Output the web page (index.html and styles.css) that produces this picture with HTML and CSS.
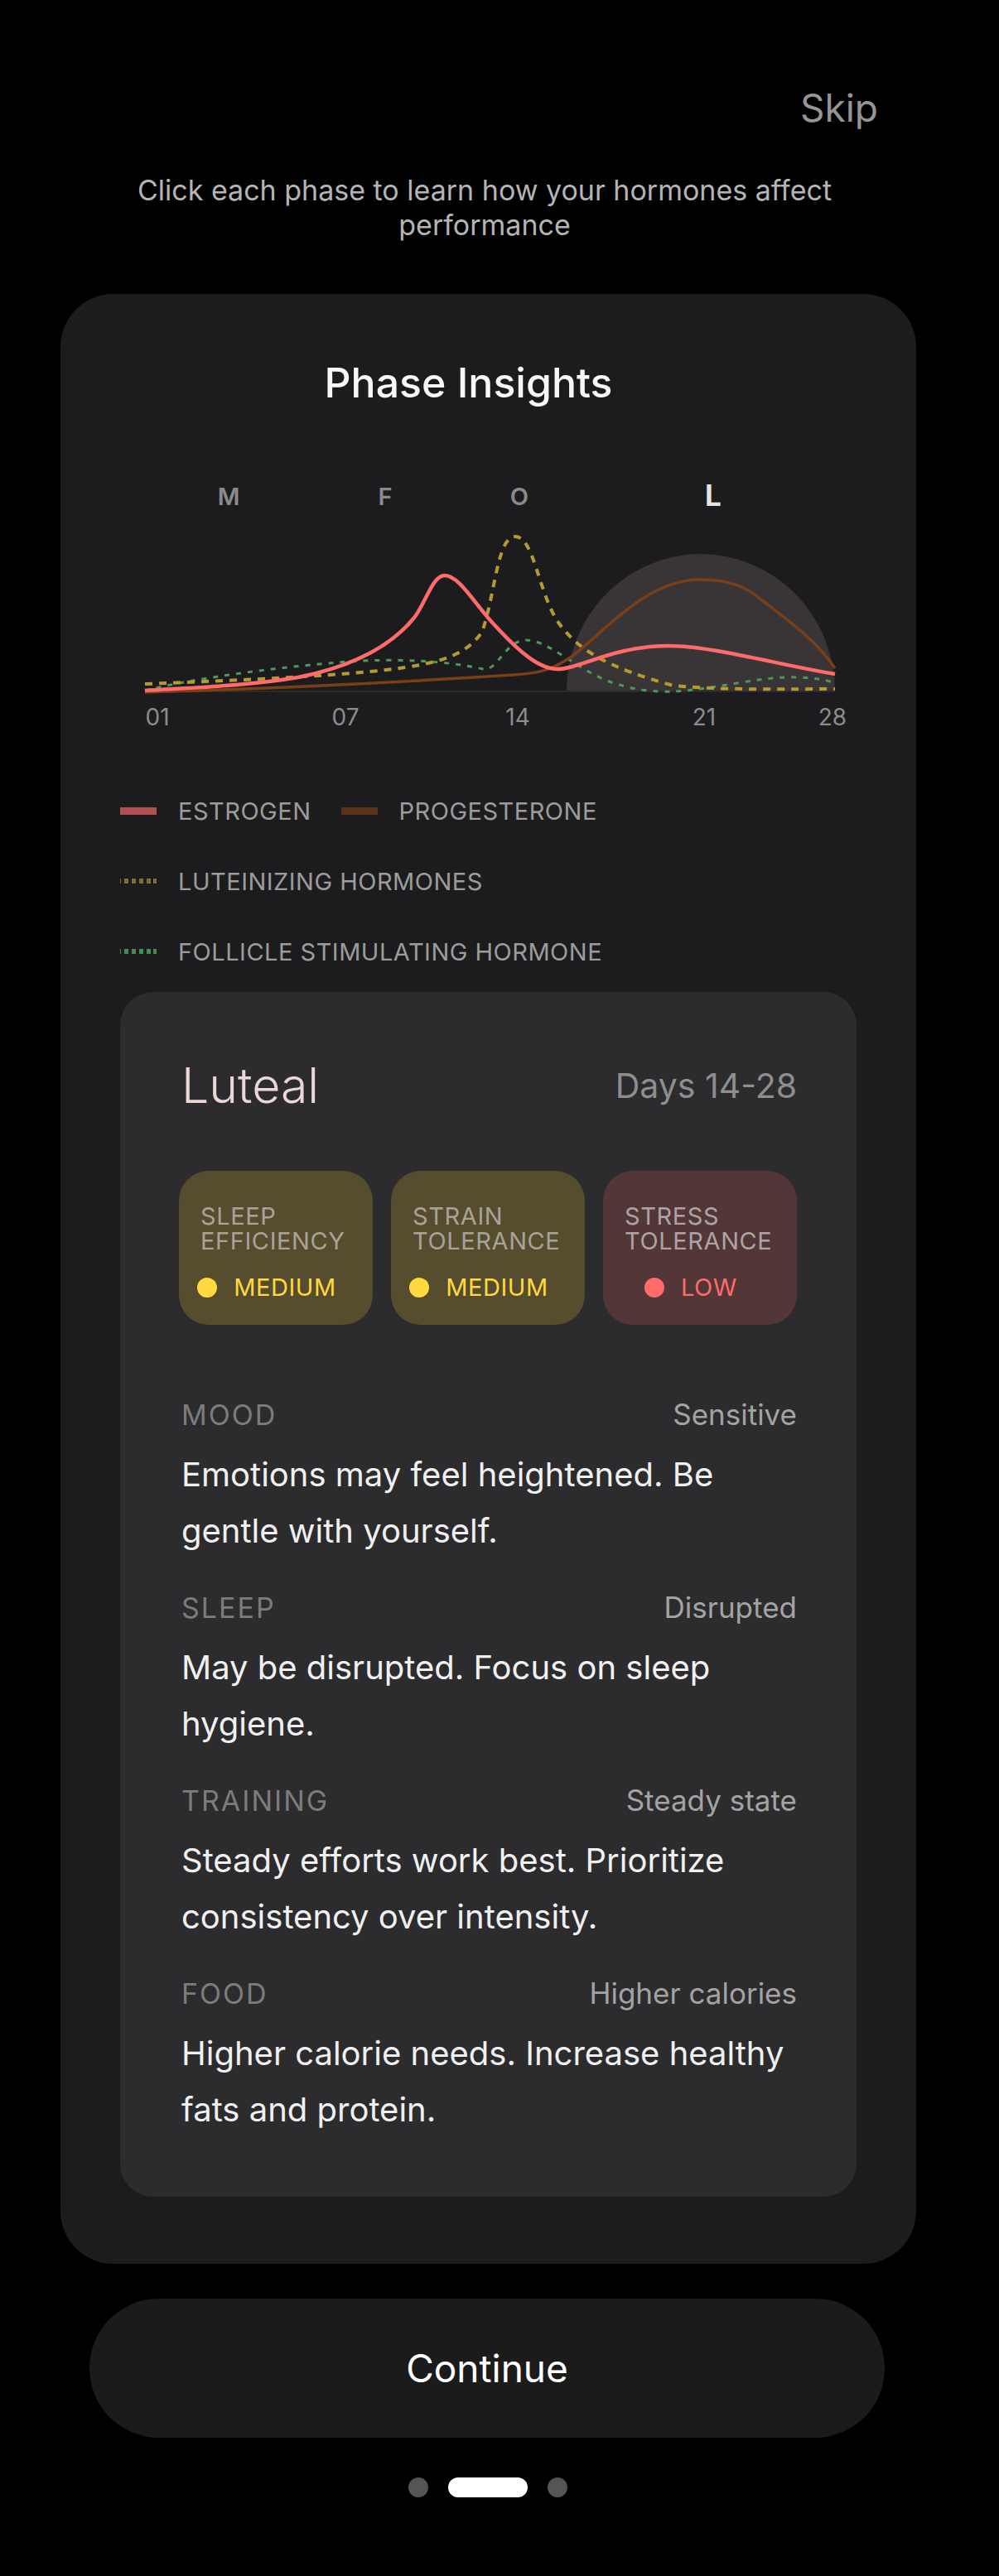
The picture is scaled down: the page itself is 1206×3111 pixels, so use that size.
FILE: index.html
```html
<!DOCTYPE html>
<html lang="en">
<head>
<meta charset="utf-8">
<title>Phase Insights</title>
<link rel="stylesheet" href="styles.css">
</head>
<body>
<div class="screen">
  <div class="topbar"><span class="skip">Skip</span></div>
  <p class="subtitle">Click each phase to learn how your hormones affect performance</p>

  <section class="card">
    <h1 class="card-title">Phase Insights</h1>

    <svg class="chart" width="889" height="340" viewBox="145 560 889 340" xmlns="http://www.w3.org/2000/svg">
      <text class="phase-label" x="276" y="612">M</text>
      <text class="phase-label" x="465" y="612">F</text>
      <text class="phase-label" x="627" y="612">O</text>
      <text class="phase-label active" x="861" y="613">L</text>

      <path class="shade" d="M684,837 A162,166 0 0 1 1008,837 Z"/>
      <line class="axis" x1="175" y1="837" x2="1008" y2="837"/>

      <path class="fsh" d="M175,836 C230,822 330,808 420,801 C480,797 540,800 583,810 C600,814 610,775 635,775 C660,775 690,805 730,823 C760,835 790,838 813,837 C860,835 920,818 963,820 C990,821 1000,824 1008,827"/>
      <path class="lh" d="M175,828 C300,823 420,818 490,808 C540,800 565,790 582,765 C598,720 600,650 622,650 C645,650 650,720 675,755 C700,790 740,810 813,830 C880,836 950,834 1008,834"/>
      <path class="prog" d="M175,838 C320,834 480,826 620,817 C650,815 665,812 690,795 C730,765 780,702 845,702 C880,702 900,710 920,727 C950,750 985,775 1008,809"/>
      <path class="estro" d="M175,836 C240,832 300,830 360,820 C420,808 470,785 500,748 C515,728 522,697 537,697 C555,697 575,735 600,760 C625,787 650,810 673,810 C700,810 740,782 807,782 C860,782 940,805 1008,816"/>

      <text class="tick" x="190" y="878">01</text>
      <text class="tick" x="417" y="878">07</text>
      <text class="tick" x="625" y="878">14</text>
      <text class="tick" x="850" y="878">21</text>
      <text class="tick" x="1005" y="878">28</text>
    </svg>

    <ul class="legend">
      <li class="legend-item"><span class="swatch swatch-estro"></span>ESTROGEN</li>
      <li class="legend-item"><span class="swatch swatch-prog"></span>PROGESTERONE</li>
      <li class="legend-item"><span class="swatch swatch-dotted swatch-lh"></span>LUTEINIZING HORMONES</li>
      <li class="legend-item"><span class="swatch swatch-dotted swatch-fsh"></span>FOLLICLE STIMULATING HORMONE</li>
    </ul>

    <div class="phase-card">
      <div class="phase-head">
        <h2 class="phase-name">Luteal</h2>
        <span class="phase-days">Days 14-28</span>
      </div>

      <div class="badges">
        <div class="badge badge-medium">
          <div class="badge-label">SLEEP<br>EFFICIENCY</div>
          <div class="badge-status"><span class="dot"></span>MEDIUM</div>
        </div>
        <div class="badge badge-medium">
          <div class="badge-label">STRAIN<br>TOLERANCE</div>
          <div class="badge-status"><span class="dot"></span>MEDIUM</div>
        </div>
        <div class="badge badge-low">
          <div class="badge-label">STRESS<br>TOLERANCE</div>
          <div class="badge-status"><span class="dot"></span>LOW</div>
        </div>
      </div>

      <div class="sections">
        <div class="section">
          <div class="section-head"><span class="section-label">MOOD</span><span class="section-value">Sensitive</span></div>
          <p class="section-body">Emotions may feel heightened. Be gentle with yourself.</p>
        </div>
        <div class="section">
          <div class="section-head"><span class="section-label">SLEEP</span><span class="section-value">Disrupted</span></div>
          <p class="section-body">May be disrupted. Focus on sleep hygiene.</p>
        </div>
        <div class="section">
          <div class="section-head"><span class="section-label">TRAINING</span><span class="section-value">Steady state</span></div>
          <p class="section-body">Steady efforts work best. Prioritize consistency over intensity.</p>
        </div>
        <div class="section">
          <div class="section-head"><span class="section-label">FOOD</span><span class="section-value">Higher calories</span></div>
          <p class="section-body">Higher calorie needs. Increase healthy fats and protein.</p>
        </div>
      </div>
    </div>
  </section>

  <button class="continue" type="button">Continue</button>

  <div class="dots">
    <span class="page-dot"></span>
    <span class="page-dot current"></span>
    <span class="page-dot"></span>
  </div>
</div>
</body>
</html>
```

FILE: styles.css
```css
* { box-sizing: border-box; }

html, body {
  margin: 0;
  padding: 0;
  background: #000;
}

body {
  font-family: Inter, "Noto Sans", "Liberation Sans", sans-serif;
  color: #f2f2f2;
}

.screen {
  width: 1178px;
  padding-bottom: 96px;
}

.topbar {
  display: flex;
  justify-content: flex-end;
  padding: 103px 118px 0 0;
}

.skip {
  font-size: 46px;
  line-height: 54px;
  color: #959595;
}

.subtitle {
  margin: 52px auto 0;
  width: 900px;
  text-align: center;
  font-size: 34px;
  line-height: 42px;
  color: #b4b4b4;
  padding-right: 8px;
}

.card {
  margin: 62px 72px 0 73px;
  background: #1c1c1e;
  border-radius: 64px;
  padding: 78px 72px 81px;
}

.card-title {
  margin: 0;
  padding-right: 48px;
  text-align: center;
  font-size: 50px;
  line-height: 58px;
  font-weight: 500;
  color: #f7f7f7;
}

.chart {
  display: block;
  margin-top: 67px;
  overflow: visible;
}

.phase-label {
  font-family: Inter, "Noto Sans", sans-serif;
  font-size: 29px;
  font-weight: 600;
  fill: #8a8a8a;
  text-anchor: middle;
}

.phase-label.active {
  font-size: 35px;
  font-weight: 700;
  fill: #e4e4e4;
}

.tick {
  font-family: Inter, "Noto Sans", sans-serif;
  font-size: 28px;
  fill: #8c8c8c;
  text-anchor: middle;
}

.shade { fill: #393435; }

.axis {
  stroke: #2b2b2d;
  stroke-width: 2;
}

.estro, .prog, .lh, .fsh { fill: none; stroke-linecap: butt; }

.estro { stroke: #ff6b6b; stroke-width: 4.5; }
.prog { stroke: #7a3f17; stroke-width: 3.5; }
.lh { stroke: #b49a2f; stroke-width: 4; stroke-dasharray: 9 8; }
.fsh { stroke: #4e9859; stroke-width: 3; stroke-dasharray: 6 8; }

.legend {
  list-style: none;
  margin: 61px 0 0;
  padding: 0;
  display: flex;
  flex-wrap: wrap;
  column-gap: 36px;
  row-gap: 45px;
}

.legend-item {
  display: flex;
  align-items: center;
  gap: 26px;
  height: 40px;
  font-size: 29px;
  letter-spacing: 0.5px;
  color: #9c9c9c;
}

.legend-item:nth-child(n+3) { flex-basis: 100%; }

.swatch {
  width: 44px;
  height: 9px;
  flex: none;
}

.swatch-estro { background: #b05050; }
.swatch-prog { background: #5c3217; }

.swatch-dotted {
  height: 6px;
  background-position: -4px 0;
}

.swatch-lh { background-image: repeating-linear-gradient(90deg, #7f6f30 0 5px, transparent 5px 9px); }
.swatch-fsh { background-image: repeating-linear-gradient(90deg, #4c8a53 0 5px, transparent 5px 9px); }

.phase-card {
  margin-top: 29px;
  background: #2c2b2d;
  border-radius: 40px;
  padding: 78px 72px 71px 74px;
}

.phase-head {
  display: flex;
  justify-content: space-between;
  align-items: center;
}

.phase-name {
  margin: 0;
  font-size: 59px;
  line-height: 70px;
  font-weight: 300;
  color: #ecd6d6;
}

.phase-days {
  font-size: 41px;
  color: #8e8e8e;
}

.badges {
  margin-top: 68px;
  display: grid;
  grid-template-columns: repeat(3, minmax(0, 1fr));
  gap: 22px;
  margin-left: -3px;
}

.badge {
  height: 186px;
  border-radius: 36px;
  padding-top: 40px;
  display: flex;
  flex-direction: column;
  gap: 24px;
  overflow: hidden;
}

.badge-medium { background: #564d2f; }
.badge-low { background: #533637; }

.badge-label {
  padding-left: 26px;
  font-size: 29px;
  line-height: 30px;
  letter-spacing: 0.6px;
  color: #a8a298;
  white-space: nowrap;
}

.badge-low .badge-label { color: #ada3a3; }

.badge-status {
  display: flex;
  align-items: center;
  justify-content: center;
  gap: 20px;
  padding-right: 22px;
  font-size: 29px;
  line-height: 34px;
  letter-spacing: 0.6px;
  white-space: nowrap;
}

.badge-medium .badge-status { color: #ffd93d; }
.badge-low .badge-status { color: #ff6b6b; }

.dot {
  flex: none;
  width: 24px;
  height: 24px;
  border-radius: 50%;
  background: currentColor;
}

.sections {
  margin-top: 88px;
  display: flex;
  flex-direction: column;
  gap: 38px;
}

.section-head {
  display: flex;
  justify-content: space-between;
  align-items: baseline;
  line-height: 40px;
}

.section-label {
  font-size: 34px;
  letter-spacing: 2px;
  color: #7c7c7c;
}

.section-value {
  font-size: 35px;
  color: #a3a3a3;
}

.section-body {
  margin: 18px 0 0;
  font-size: 40px;
  line-height: 68px;
  color: #f0f0f0;
}

.continue {
  display: block;
  width: 960px;
  height: 168px;
  margin: 42px 0 0 108px;
  border: none;
  border-radius: 84px;
  background: #1b1b1b;
  color: #fff;
  font-family: inherit;
  font-size: 46px;
  padding: 0;
}

.dots {
  display: flex;
  justify-content: center;
  gap: 24px;
  margin-top: 48px;
}

.page-dot {
  width: 24px;
  height: 24px;
  border-radius: 12px;
  background: #555;
}

.page-dot.current {
  width: 96px;
  background: #fff;
}
```
